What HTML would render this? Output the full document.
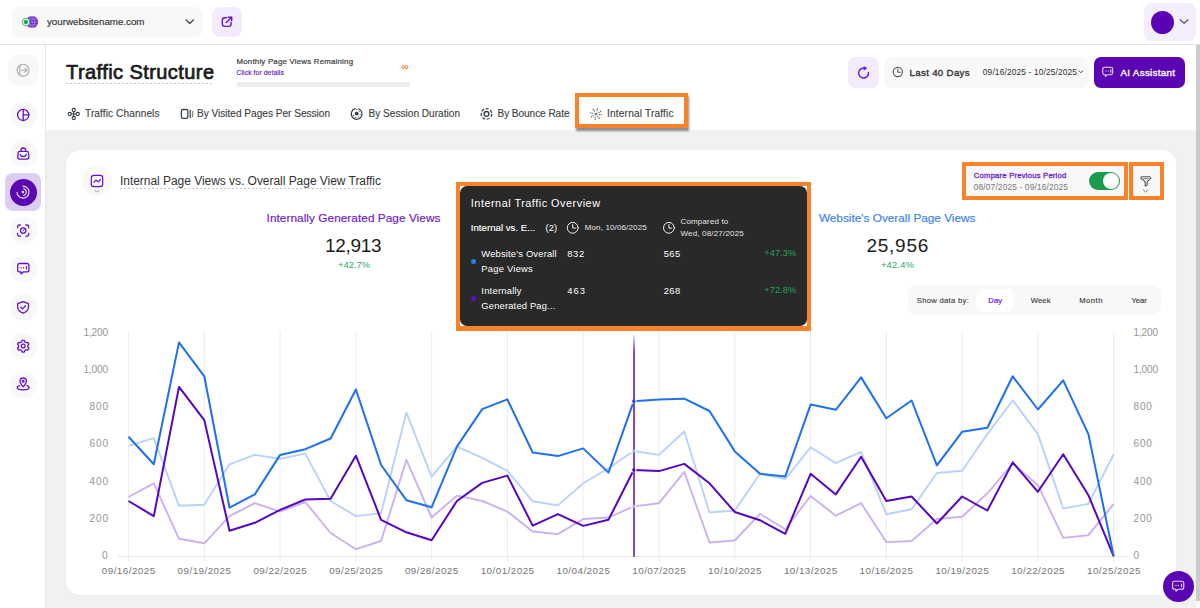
<!DOCTYPE html>
<html><head><meta charset="utf-8">
<style>
*{box-sizing:border-box;margin:0;padding:0}
html,body{width:1200px;height:608px;overflow:hidden;background:#fff;font-family:"Liberation Sans",sans-serif;color:#222}
.abs{position:absolute}
.t{position:absolute;white-space:pre;line-height:1}
.b{position:absolute}
</style></head><body>
<!-- main gray area -->
<div class="b" style="left:45px;top:45px;width:1151px;height:563px;background:#f1f1f1"></div>
<!-- page header white -->
<div class="b" style="left:45px;top:45px;width:1151px;height:84.5px;background:#fff"></div>
<!-- top bar -->
<div class="b" style="left:0;top:0;width:1200px;height:45px;background:#fff;border-bottom:1px solid #e3e3e3"></div>
<!-- sidebar -->
<div class="b" style="left:0;top:45px;width:45.5px;height:563px;background:#fff;border-right:1px solid #e6e6e6"></div>
<!-- scrollbar -->
<div class="b" style="left:1196px;top:45px;width:4px;height:563px;background:#fafafa"></div>
<div class="b" style="left:1196px;top:45px;width:4px;height:556px;background:#cbcbcb"></div>

<!-- top bar widgets -->
<div class="b" style="left:12px;top:7px;width:191px;height:30px;border-radius:8px;background:#f8f8f8"></div>
<div class="b" style="left:212px;top:7px;width:30px;height:30px;border-radius:8px;background:#f3ebfd"></div>
<div class="b" style="left:1144px;top:3px;width:52px;height:38px;border-radius:8px;background:#f3edfc"></div>
<div class="b" style="left:1151px;top:10.7px;width:23.2px;height:23.2px;border-radius:50%;background:#5a02b6"></div>

<!-- header widgets -->
<div class="b" style="left:66px;top:83px;width:148px;height:1px;background:repeating-linear-gradient(90deg,#c4c4c4 0 2.2px,transparent 2.2px 4px)"></div>
<div class="b" style="left:236.5px;top:82.2px;width:173px;height:5.2px;background:#ededed"></div>
<div class="b" style="left:848px;top:57px;width:31px;height:30.5px;border-radius:8px;background:#f3ebfd"></div>
<div class="b" style="left:884.4px;top:57px;width:204.6px;height:30.5px;border-radius:8px;background:#f8f8f8"></div>
<div class="b" style="left:1094px;top:57px;width:91px;height:30.5px;border-radius:7px;background:#5a06b3"></div>

<!-- Active tab orange box -->
<div class="b" style="left:575px;top:93px;width:113px;height:35px;border:4px solid #fa8228;background:#fff;box-shadow:1px 2.5px 2px rgba(0,0,0,.45)"></div>

<!-- sidebar buttons -->
<div class="b" style="left:8px;top:54.5px;width:30.5px;height:30.5px;border-radius:9px;background:#f8f8f8"></div>
<div class="b" style="left:10px;top:101.7px;width:26.5px;height:26.5px;border-radius:50%;background:#f8f8f8"></div>
<div class="b" style="left:10px;top:140.2px;width:26.5px;height:26.5px;border-radius:50%;background:#f8f8f8"></div>
<div class="b" style="left:4.6px;top:173.2px;width:36.8px;height:38.3px;border-radius:8px;background:#dccdf3"></div>
<div class="b" style="left:9.5px;top:178.6px;width:27px;height:27px;border-radius:50%;background:#5a06b3"></div>
<div class="b" style="left:10px;top:217.3px;width:26.5px;height:26.5px;border-radius:50%;background:#f8f8f8"></div>
<div class="b" style="left:10px;top:255.2px;width:26.5px;height:26.5px;border-radius:50%;background:#f8f8f8"></div>
<div class="b" style="left:10px;top:294px;width:26.5px;height:26.5px;border-radius:50%;background:#f8f8f8"></div>
<div class="b" style="left:10px;top:332.8px;width:26.5px;height:26.5px;border-radius:50%;background:#f8f8f8"></div>
<div class="b" style="left:10px;top:371px;width:26.5px;height:26.5px;border-radius:50%;background:#f8f8f8"></div>

<!-- card -->
<div class="b" style="left:65.8px;top:150.3px;width:1110.4px;height:444.5px;border-radius:14px;background:#fff;box-shadow:0 0 2px rgba(0,0,0,.06)"></div>
<div class="b" style="left:82px;top:166.3px;width:30px;height:30px;border-radius:50%;background:#f8f8f8"></div>
<div class="b" style="left:120px;top:188px;width:261px;height:1px;background:repeating-linear-gradient(90deg,#c4c4c4 0 2.2px,transparent 2.2px 4px)"></div>

<!-- compare box -->
<div class="b" style="left:962.1px;top:162.1px;width:165.6px;height:37.6px;border:4px solid #fa8228;background:#f8f8f8"></div>
<div class="b" style="left:1129.2px;top:162.1px;width:34.5px;height:37.6px;border:4px solid #fa8228;background:#f8f8f8"></div>
<div class="b" style="left:1089px;top:171.9px;width:31px;height:18.6px;border-radius:10px;background:#1a9c4c"></div>
<div class="b" style="left:1102.6px;top:173.2px;width:16px;height:16px;border-radius:50%;background:#fff"></div>

<!-- show data by -->
<div class="b" style="left:907.5px;top:285.1px;width:253.3px;height:30.4px;border-radius:9px;background:#f8f8f8"></div>
<div class="b" style="left:976.3px;top:288.9px;width:37.6px;height:23.1px;border-radius:8px;background:#fff"></div>

<svg class="abs" style="left:0;top:0" width="1200" height="608" viewBox="0 0 1200 608">
<line x1="128.5" y1="331" x2="128.5" y2="561" stroke="#ececec" stroke-width="1"/>
<line x1="204.3" y1="331" x2="204.3" y2="561" stroke="#ececec" stroke-width="1"/>
<line x1="280.1" y1="331" x2="280.1" y2="561" stroke="#ececec" stroke-width="1"/>
<line x1="355.9" y1="331" x2="355.9" y2="561" stroke="#ececec" stroke-width="1"/>
<line x1="431.6" y1="331" x2="431.6" y2="561" stroke="#ececec" stroke-width="1"/>
<line x1="507.4" y1="331" x2="507.4" y2="561" stroke="#ececec" stroke-width="1"/>
<line x1="583.2" y1="331" x2="583.2" y2="561" stroke="#ececec" stroke-width="1"/>
<line x1="659.0" y1="331" x2="659.0" y2="561" stroke="#ececec" stroke-width="1"/>
<line x1="734.8" y1="331" x2="734.8" y2="561" stroke="#ececec" stroke-width="1"/>
<line x1="810.6" y1="331" x2="810.6" y2="561" stroke="#ececec" stroke-width="1"/>
<line x1="886.3" y1="331" x2="886.3" y2="561" stroke="#ececec" stroke-width="1"/>
<line x1="962.1" y1="331" x2="962.1" y2="561" stroke="#ececec" stroke-width="1"/>
<line x1="1037.9" y1="331" x2="1037.9" y2="561" stroke="#ececec" stroke-width="1"/>
<line x1="1113.7" y1="331" x2="1113.7" y2="561" stroke="#ececec" stroke-width="1"/>
<line x1="118" y1="556.6" x2="1127" y2="556.6" stroke="#e6e6e6" stroke-width="1"/>
<polyline points="128.5,497.0 153.8,483.3 179.0,538.8 204.3,543.3 229.5,516.1 254.8,503.2 280.1,511.6 305.3,502.1 330.6,533.0 355.9,549.2 381.1,541.0 406.4,459.8 431.6,517.5 456.9,495.6 482.2,501.0 507.4,511.6 532.7,531.5 557.9,534.1 583.2,519.0 608.5,517.5 633.7,506.4 659.0,503.2 684.3,471.9 709.5,542.5 734.8,540.5 760.0,513.8 785.3,529.3 810.6,495.9 835.8,515.7 861.1,503.2 886.3,542.1 911.6,541.0 936.9,519.0 962.1,516.8 987.4,493.3 1012.7,463.5 1037.9,485.1 1063.2,537.9 1088.4,535.2 1113.7,503.9" fill="none" stroke="#ccb1ee" stroke-width="1.9" stroke-linejoin="round"/>
<polyline points="128.5,445.8 153.8,438.2 179.0,505.8 204.3,504.7 229.5,464.3 254.8,454.9 280.1,458.7 305.3,453.6 330.6,501.0 355.9,516.1 381.1,513.1 406.4,412.6 431.6,476.7 456.9,446.6 482.2,457.9 507.4,470.8 532.7,501.3 557.9,505.4 583.2,483.3 608.5,468.2 633.7,451.0 659.0,454.9 684.3,431.5 709.5,512.5 734.8,510.5 760.0,473.8 785.3,479.0 810.6,447.3 835.8,463.1 861.1,451.8 886.3,514.2 911.6,509.2 936.9,473.0 962.1,470.8 987.4,434.1 1012.7,400.2 1037.9,434.1 1063.2,508.4 1088.4,503.9 1113.7,454.2" fill="none" stroke="#b9d2fa" stroke-width="1.9" stroke-linejoin="round"/>
<polyline points="128.5,501.0 153.8,516.1 179.0,386.9 204.3,420.1 229.5,530.8 254.8,522.8 280.1,509.9 305.3,499.5 330.6,498.7 355.9,455.7 381.1,519.8 406.4,532.3 431.6,540.3 456.9,501.0 482.2,482.9 507.4,475.6 532.7,525.6 557.9,514.2 583.2,525.9 608.5,519.8 633.7,470.0 659.0,471.1 684.3,463.9 709.5,483.3 734.8,512.0 760.0,520.2 785.3,533.8 810.6,473.8 835.8,494.4 861.1,456.8 886.3,501.0 911.6,496.5 936.9,523.5 962.1,496.5 987.4,510.5 1012.7,462.4 1037.9,491.8 1063.2,454.2 1088.4,495.2 1113.7,556.3" fill="none" stroke="#5606c0" stroke-width="2" stroke-linejoin="round"/>
<polyline points="128.5,436.7 153.8,464.3 179.0,342.4 204.3,376.3 229.5,507.7 254.8,494.4 280.1,454.9 305.3,449.2 330.6,438.5 355.9,389.5 381.1,465.0 406.4,500.2 431.6,507.3 456.9,446.6 482.2,409.1 507.4,399.4 532.7,452.5 557.9,456.1 583.2,448.4 608.5,472.6 633.7,401.3 659.0,399.4 684.3,398.7 709.5,411.0 734.8,451.4 760.0,473.8 785.3,476.4 810.6,404.6 835.8,409.8 861.1,377.4 886.3,418.2 911.6,400.5 936.9,465.4 962.1,431.8 987.4,427.7 1012.7,376.3 1037.9,409.5 1063.2,380.4 1088.4,434.1 1113.7,556.3" fill="none" stroke="#1d70ee" stroke-width="2" stroke-linejoin="round"/>
<circle cx="633.8" cy="401.3" r="2.8" fill="#fff"/>
<circle cx="633.8" cy="470.0" r="2.8" fill="#fff"/>
<circle cx="633.8" cy="451.0" r="2.8" fill="#fff"/>
<circle cx="633.8" cy="506.4" r="2.8" fill="#fff"/>
</svg>

<!-- hover line -->
<div class="b" style="left:632.8px;top:335px;width:2px;height:221.5px;background:linear-gradient(to bottom,rgba(132,72,208,.15) 0,rgba(132,72,208,1) 16px,#8448d0 100%)"></div>

<!-- tooltip -->
<div class="b" style="left:456.2px;top:182px;width:354.6px;height:148.8px;background:#fa8228"></div>
<div class="b" style="left:460.3px;top:186.2px;width:346.4px;height:139.6px;background:#fff"></div>
<div class="b" style="left:460.3px;top:186.2px;width:346.4px;height:139.6px;border-radius:7px;background:#292929"></div>
<div class="b" style="left:470.8px;top:259px;width:5.4px;height:5.4px;border-radius:50%;background:#2b7bf0"></div>
<div class="b" style="left:470.8px;top:295.6px;width:5.4px;height:5.4px;border-radius:50%;background:#5a0fc0"></div>

<!-- FAB -->
<div class="b" style="left:1163px;top:571px;width:31px;height:31px;border-radius:50%;background:#5a06b3"></div>

<svg class="abs" style="left:0;top:0" width="1200" height="608" viewBox="0 0 1200 608" fill="none" stroke-linecap="round" stroke-linejoin="round">
<!-- site icon -->
<circle cx="32.1" cy="22" r="6" fill="#6a1fc4"/>
<g stroke="#dcc8f7" stroke-width="0.55" opacity=".85"><line x1="32.1" y1="16.2" x2="32.1" y2="27.8"/><line x1="26.4" y1="22" x2="37.9" y2="22"/><line x1="27.2" y1="19.1" x2="37" y2="19.1"/><line x1="27.2" y1="24.9" x2="37" y2="24.9"/><ellipse cx="32.1" cy="22" rx="2.7" ry="5.8"/></g>
<circle cx="25.9" cy="22.05" r="3.7" fill="#eaf8f0" stroke="#35b36b" stroke-width="0.9"/>
<circle cx="25.9" cy="22.05" r="2.1" fill="#12a150"/>
<!-- site chevron -->
<polyline points="186,19.8 189.8,23.5 193.6,19.8" stroke="#444" stroke-width="1.2"/>
<!-- link icon -->
<g stroke="#6412cc" stroke-width="1.4"><path d="M226.5 17.8h-1.6a2.6 2.6 0 0 0-2.6 2.6v3.4a2.6 2.6 0 0 0 2.6 2.6h3.6a2.6 2.6 0 0 0 2.6-2.6v-1.5"/><path d="M226.3 22.6l5.2-5.2"/><path d="M228.3 17.2h3.4v3.4" /></g>
<!-- avatar chevron -->
<polyline points="1180.3,19.7 1184.1,23.4 1187.9,19.7" stroke="#555" stroke-width="1.2"/>
<!-- refresh -->
<g stroke="#6412cc" stroke-width="1.4"><path d="M868.4 72.4a4.900 4.900 0 1 1-4.300-4.200"/></g>
<path d="M864.2 66.700l2.500 1.600-2.500 1.700z" fill="#6412cc" stroke="#6412cc" stroke-width="0.700"/>
<!-- clock header -->
<g stroke="#555" stroke-width="1.1"><circle cx="897.8" cy="72" r="4.6"/><path d="M897.8 69.2v3.1h2.6"/></g>
<!-- date chevron -->
<polyline points="1078.9,70.8 1080.9,72.7 1082.9,70.8" stroke="#444" stroke-width="0.9"/>
<!-- AI chat icon -->
<g stroke="#e6d8fb" stroke-width="1.1"><path d="M1104.6 67.3h6.2a1.9 1.9 0 0 1 1.9 1.9v3.6a1.9 1.9 0 0 1-1.9 1.9h-3.4l-2 1.7v-1.7h-.8a1.9 1.9 0 0 1-1.9-1.9v-3.6a1.9 1.9 0 0 1 1.9-1.9z"/><path d="M1110.8 69.7v2.6"/></g>
<circle cx="1106" cy="71" r="0.6" fill="#e6d8fb"/><circle cx="1108.2" cy="71" r="0.6" fill="#e6d8fb"/>
<!-- FAB chat icon -->
<g stroke="#e6d8fb" stroke-width="1.1"><path d="M1174.6 581.3h7.2a2 2 0 0 1 2 2v4a2 2 0 0 1-2 2h-3.6l-2.2 1.9v-1.9h-1.4a2 2 0 0 1-2-2v-4a2 2 0 0 1 2-2z"/><path d="M1181.6 584v2.8"/></g>
<circle cx="1176" cy="585.4" r="0.65" fill="#e6d8fb"/><circle cx="1178.5" cy="585.4" r="0.65" fill="#e6d8fb"/>

<!-- tab icons -->
<g stroke="#333b42" stroke-width="1.1"><circle cx="73.75" cy="110" r="1.6"/><circle cx="73.75" cy="118" r="1.6"/><circle cx="69.75" cy="114" r="1.6"/><circle cx="77.75" cy="114" r="1.6"/><path d="M73.75 111.6v4.8M71.35 114h4.8"/></g>
<g stroke="#3a444c" stroke-width="1.3"><rect x="181.4" y="109.5" width="6.4" height="8.9" rx="1.4"/></g>
<path d="M190.3 110.4v7.1" stroke="#5f686f" stroke-width="1.6"/><path d="M192.600 111.3v5.3" stroke="#7f878d" stroke-width="1.2"/>
<g stroke="#333b42" stroke-width="1.2"><path d="M355.2 108.7a5.4 5.4 0 1 0 3.2 0.1" /><circle cx="356.7" cy="113.6" r="1.3" fill="#333b42"/></g>
<g fill="#555"><circle cx="359.3" cy="111.3" r=".6"/><circle cx="360.1" cy="114.3" r=".6"/><circle cx="358.6" cy="116.8" r=".6"/><circle cx="355.6" cy="117.4" r=".6"/><circle cx="353.5" cy="115.4" r=".6"/><circle cx="356.6" cy="109.6" r=".7"/></g>
<g stroke="#333b42"><circle cx="486.5" cy="113.9" r="5.3" stroke-width="1.2" stroke-dasharray="3.1 1.6" stroke-linecap="butt"/><circle cx="486.5" cy="113.9" r="2.4" stroke-width="1.3"/></g>
<g stroke="#5a5a5a" stroke-width="1.1" stroke-linecap="butt"><circle cx="596" cy="114" r="1.6" fill="#8a8a8a" stroke="none"/><circle cx="596" cy="114" r="3.3" stroke-dasharray="1.1 1.5"/><circle cx="596" cy="114" r="5.2" stroke-dasharray="1.3 2.78"/></g>

<!-- card icon -->
<g stroke="#6412cc" stroke-width="1.2"><rect x="91.3" y="175.4" width="11.4" height="11.2" rx="2.6"/><polyline points="93.9,182.3 96,180.2 98.2,181.8 100.4,179.4"/></g>
<polyline points="94.9,190.3 97,192.2 99.1,190.3" stroke="#999" stroke-width="0.9"/>
<!-- filter icon -->
<g stroke="#555" stroke-width="1.1"><path d="M1141.6 176.8h8.2l1 1.5-3.6 3.3v3.4l-2 .9v-4.3l-4.4-3.3z"/><path d="M1143.6 178.6h4.6" stroke-width=".8"/></g>
<polyline points="1143.4,190 1145.6,192.1 1147.8,190" stroke="#666" stroke-width="0.9"/>

<!-- tooltip clocks -->
<g stroke="#f0f0f0" stroke-width="1"><circle cx="572.7" cy="227.8" r="5.4"/><path d="M572.7 224.6v3.5h2.8"/><circle cx="668.9" cy="227.8" r="5.4"/><path d="M668.9 224.6v3.5h2.8"/></g>
<!-- hover dots -->
<circle cx="633.8" cy="401.3" r="1.7" fill="#2a3fd8"/><circle cx="633.8" cy="470" r="1.7" fill="#5606c0"/><circle cx="633.8" cy="451" r="1.6" fill="#a9b8f0"/><circle cx="633.8" cy="506.3" r="1.6" fill="#c5a6ea"/>

<!-- sidebar icons -->
<g stroke="#a8a8a8" stroke-width="1.1"><circle cx="23.1" cy="70.2" r="5.9"/><path d="M19.9 65.4v9.6"/><path d="M21.8 70.2h5M25 68.3l1.9 1.9-1.9 1.9"/></g>
<g stroke="#6412cc" stroke-width="1.3"><circle cx="23.2" cy="114.9" r="5.6"/><path d="M23.2 109.3v11.2M23.2 114.9h5.6"/></g>
<g stroke="#6412cc" stroke-width="1.3"><path d="M19.6 151.4h7.4a1.4 1.4 0 0 1 1.4 1.4l.5 4.4a1.8 1.8 0 0 1-1.8 1.9h-7.6a1.8 1.8 0 0 1-1.8-1.9l.5-4.4a1.4 1.4 0 0 1 1.4-1.400z"/><path d="M20.900 151.200v-.8a2.400 2.400 0 0 1 4.800 0v.8"/><path d="M20.300 154.400a3.200 3.200 0 0 0 6 0"/></g>
<g stroke="#efe6fb" stroke-width="1.1"><path d="M23 186.1A6 6 0 1 1 17 192.3"/><path d="M23.6 188.7a3.500 3.500 0 0 1 0 6.800"/><circle cx="22.900" cy="192.100" r=".8" fill="#efe6fb"/></g>
<g stroke="#6412cc" stroke-width="1.3"><path d="M17.600 227.800v-1a1.800 1.800 0 0 1 1.800-1.800h1M25.900 225h1a1.800 1.800 0 0 1 1.800 1.800v1M28.700 233.400v1a1.800 1.800 0 0 1-1.800 1.800h-1M20.400 236.200h-1a1.800 1.800 0 0 1-1.800-1.800v-1"/><circle cx="23.200" cy="230.600" r="2.700"/><path d="M23.200 230.600l1.200-1.400" stroke-width="1"/></g>
<g stroke="#6412cc" stroke-width="1.3"><path d="M19.700 263.500h7.200a2 2 0 0 1 2 2v4.400a2 2 0 0 1-2 2h-3.600l-2.300 2v-2h-1.300a2 2 0 0 1-2-2v-4.400a2 2 0 0 1 2-2z"/><path d="M26.400 266.300v2.800" stroke-width="1.1"/></g>
<circle cx="21" cy="267.700" r=".7" fill="#6412cc"/><circle cx="23.500" cy="267.700" r=".7" fill="#6412cc"/>
<g stroke="#6412cc" stroke-width="1.3"><path d="M23.100 301.600l5.400 2.100v3.300c0 3-2.300 5-5.400 6.100c-3.100-1.100-5.400-3.100-5.400-6.100v-3.300z"/><path d="M20.800 307.200l1.700 1.700 3.100-3.200"/></g>
<g stroke="#6412cc" stroke-width="1.3"><circle cx="23.200" cy="346" r="1.900"/><path d="M22.100 340.300h2.200l.5 1.600 1.400.800 1.600-.4 1.100 1.900-1.100 1.200v1.600l1.100 1.200-1.100 1.900-1.600-.4-1.400.8-.5 1.600h-2.200l-.5-1.600-1.400-.8-1.600.4-1.100-1.900 1.100-1.200v-1.600l-1.100-1.200 1.100-1.900 1.600.4 1.400-.8z"/></g>
<g stroke="#6412cc" stroke-width="1.3"><path d="M23.200 386.800c-1.900-2.200-3.200-3.900-3.200-5.600a3.200 3.200 0 0 1 6.400 0c0 1.700-1.300 3.400-3.200 5.600z"/><circle cx="23.200" cy="381.200" r=".9"/><path d="M19.500 385.600c-1.500.5-2.300 1.200-2.300 2 0 1.400 2.700 2.300 6 2.300s6-.9 6-2.300c0-.8-.8-1.500-2.300-2"/></g>
</svg>
<!-- infinity -->
<div class="t" style="left:401.6px;top:61.6px;font-size:10px;font-weight:700;color:#fa8228">∞</div>

<div class="t" style="left:47.0px;top:17.2px;font-size:9.8px;font-weight:400;color:#2f2f2f;letter-spacing:-0.029px;-webkit-text-stroke:0.14px #2f2f2f">yourwebsitename.com</div>
<div class="t" style="left:66.0px;top:62.4px;font-size:20px;font-weight:400;color:#1c1c1c;letter-spacing:0.428px;-webkit-text-stroke:0.72px #1c1c1c">Traffic Structure</div>
<div class="t" style="left:236.5px;top:58.2px;font-size:7.8px;font-weight:400;color:#3a3a3a;letter-spacing:0.243px;-webkit-text-stroke:0.20px #3a3a3a">Monthly Page Views Remaining</div>
<div class="t" style="left:236.5px;top:69.7px;font-size:6.7px;font-weight:400;color:#6b21c8;letter-spacing:0.122px;-webkit-text-stroke:0.17px #6b21c8">Click for details</div>
<div class="t" style="left:909.6px;top:67.8px;font-size:9.7px;font-weight:400;color:#333;letter-spacing:0.314px;-webkit-text-stroke:0.35px #333">Last 40 Days</div>
<div class="t" style="left:982.8px;top:68.2px;font-size:8.4px;font-weight:400;color:#333;letter-spacing:0.133px">09/16/2025 - 10/25/2025</div>
<div class="t" style="left:1120.5px;top:67.8px;font-size:9.8px;font-weight:400;color:#fff;letter-spacing:0.301px;-webkit-text-stroke:0.35px #fff">AI Assistant</div>
<div class="t" style="left:85.0px;top:108.8px;font-size:10.1px;font-weight:400;color:#3f3f3f;letter-spacing:0.104px;-webkit-text-stroke:0.14px #3f3f3f">Traffic Channels</div>
<div class="t" style="left:197.0px;top:108.8px;font-size:10.1px;font-weight:400;color:#3f3f3f;letter-spacing:-0.013px;-webkit-text-stroke:0.14px #3f3f3f">By Visited Pages Per Session</div>
<div class="t" style="left:368.5px;top:108.8px;font-size:10.1px;font-weight:400;color:#3f3f3f;letter-spacing:0.003px;-webkit-text-stroke:0.14px #3f3f3f">By Session Duration</div>
<div class="t" style="left:497.5px;top:108.8px;font-size:10.1px;font-weight:400;color:#3f3f3f;letter-spacing:-0.073px;-webkit-text-stroke:0.14px #3f3f3f">By Bounce Rate</div>
<div class="t" style="left:607.0px;top:108.8px;font-size:10.1px;font-weight:400;color:#3f3f3f;letter-spacing:0.188px;-webkit-text-stroke:0.14px #3f3f3f">Internal Traffic</div>
<div class="t" style="left:120.0px;top:174.7px;font-size:12px;font-weight:400;color:#333;letter-spacing:-0.038px">Internal Page Views vs. Overall Page View Traffic</div>
<div class="t" style="left:266.6px;top:212.6px;font-size:11.8px;font-weight:400;color:#6b21c8;letter-spacing:0.051px;-webkit-text-stroke:0.17px #6b21c8">Internally Generated Page Views</div>
<div class="t" style="left:324.9px;top:236.4px;font-size:19px;font-weight:400;color:#1c1c1c;letter-spacing:-0.285px">12,913</div>
<div class="t" style="left:338.0px;top:260.3px;font-size:9.4px;font-weight:400;color:#2aa86a;letter-spacing:0.027px">+42.7%</div>
<div class="t" style="left:818.9px;top:212.6px;font-size:11.8px;font-weight:400;color:#3b82f6;letter-spacing:0.001px;-webkit-text-stroke:0.17px #3b82f6">Website's Overall Page Views</div>
<div class="t" style="left:866.5px;top:236.4px;font-size:19px;font-weight:400;color:#1c1c1c;letter-spacing:0.735px">25,956</div>
<div class="t" style="left:880.9px;top:260.3px;font-size:9.4px;font-weight:400;color:#2aa86a;letter-spacing:0.228px">+42.4%</div>
<div class="t" style="left:973.8px;top:171.7px;font-size:7.7px;font-weight:400;color:#6b21c8;letter-spacing:0.203px;-webkit-text-stroke:0.28px #6b21c8">Compare Previous Period</div>
<div class="t" style="left:973.8px;top:182.9px;font-size:8.3px;font-weight:400;color:#777;letter-spacing:0.166px">08/07/2025 - 09/16/2025</div>
<div class="t" style="left:916.8px;top:296.9px;font-size:7.7px;font-weight:400;color:#3a3a3a;letter-spacing:0.272px;-webkit-text-stroke:0.11px #3a3a3a">Show data by:</div>
<div class="t" style="left:988.2px;top:296.9px;font-size:7.7px;font-weight:400;color:#6b21c8;letter-spacing:0.164px;-webkit-text-stroke:0.20px #6b21c8">Day</div>
<div class="t" style="left:1030.7px;top:296.9px;font-size:7.7px;font-weight:400;color:#333;letter-spacing:0.095px;-webkit-text-stroke:0.11px #333">Week</div>
<div class="t" style="left:1079.2px;top:296.9px;font-size:7.7px;font-weight:400;color:#333;letter-spacing:0.481px;-webkit-text-stroke:0.11px #333">Month</div>
<div class="t" style="left:1131.5px;top:296.9px;font-size:7.7px;font-weight:400;color:#333;letter-spacing:-0.049px;-webkit-text-stroke:0.11px #333">Year</div>
<div class="t" style="left:470.8px;top:197.7px;font-size:10.9px;font-weight:400;color:#fff;letter-spacing:0.499px">Internal Traffic Overview</div>
<div class="t" style="left:470.8px;top:223.1px;font-size:9.6px;font-weight:400;color:#fff;letter-spacing:0.031px;-webkit-text-stroke:0.13px #fff">Internal vs. E...</div>
<div class="t" style="left:545.5px;top:223.2px;font-size:9.4px;font-weight:400;color:#fff;letter-spacing:0.116px">(2)</div>
<div class="t" style="left:584.7px;top:223.9px;font-size:8px;font-weight:400;color:#e6e6e6;letter-spacing:0.140px">Mon, 10/06/2025</div>
<div class="t" style="left:680.5px;top:218.3px;font-size:8px;font-weight:400;color:#e6e6e6;letter-spacing:0.155px">Compared to</div>
<div class="t" style="left:680.5px;top:229.5px;font-size:8px;font-weight:400;color:#e6e6e6;letter-spacing:0.172px">Wed, 08/27/2025</div>
<div class="t" style="left:481.3px;top:249.1px;font-size:9.4px;font-weight:400;color:#fff;letter-spacing:0.182px">Website's Overall</div>
<div class="t" style="left:481.3px;top:263.7px;font-size:9.4px;font-weight:400;color:#fff;letter-spacing:0.240px">Page Views</div>
<div class="t" style="left:567.2px;top:249.1px;font-size:9.4px;font-weight:400;color:#fff;letter-spacing:0.672px">832</div>
<div class="t" style="left:663.7px;top:249.1px;font-size:9.4px;font-weight:400;color:#fff;letter-spacing:0.472px">565</div>
<div class="t" style="left:764.2px;top:249.2px;font-size:9.2px;font-weight:400;color:#1fa85a;letter-spacing:0.116px">+47.3%</div>
<div class="t" style="left:481.3px;top:285.9px;font-size:9.4px;font-weight:400;color:#fff;letter-spacing:0.239px">Internally</div>
<div class="t" style="left:481.3px;top:300.7px;font-size:9.4px;font-weight:400;color:#fff;letter-spacing:0.173px">Generated Pag...</div>
<div class="t" style="left:567.2px;top:285.9px;font-size:9.4px;font-weight:400;color:#fff;letter-spacing:1.072px">463</div>
<div class="t" style="left:663.7px;top:285.9px;font-size:9.4px;font-weight:400;color:#fff;letter-spacing:0.472px">268</div>
<div class="t" style="left:764.2px;top:286.0px;font-size:9.2px;font-weight:400;color:#1fa85a;letter-spacing:0.116px">+72.8%</div>
<div class="t" style="left:83.5px;top:327.6px;font-size:10.1px;font-weight:400;color:#969696;letter-spacing:-0.191px">1,200</div>
<div class="t" style="left:1133.5px;top:327.6px;font-size:10.1px;font-weight:400;color:#969696;letter-spacing:-0.191px">1,200</div>
<div class="t" style="left:83.5px;top:364.8px;font-size:10.1px;font-weight:400;color:#969696;letter-spacing:-0.191px">1,000</div>
<div class="t" style="left:1133.5px;top:364.8px;font-size:10.1px;font-weight:400;color:#969696;letter-spacing:-0.191px">1,000</div>
<div class="t" style="left:89.6px;top:402.1px;font-size:10.1px;font-weight:400;color:#969696;letter-spacing:0.778px">800</div>
<div class="t" style="left:1133.5px;top:402.1px;font-size:10.1px;font-weight:400;color:#969696;letter-spacing:0.778px">800</div>
<div class="t" style="left:89.6px;top:439.4px;font-size:10.1px;font-weight:400;color:#969696;letter-spacing:0.778px">600</div>
<div class="t" style="left:1133.5px;top:439.4px;font-size:10.1px;font-weight:400;color:#969696;letter-spacing:0.778px">600</div>
<div class="t" style="left:89.6px;top:476.6px;font-size:10.1px;font-weight:400;color:#969696;letter-spacing:0.778px">400</div>
<div class="t" style="left:1133.5px;top:476.6px;font-size:10.1px;font-weight:400;color:#969696;letter-spacing:0.778px">400</div>
<div class="t" style="left:89.6px;top:513.9px;font-size:10.1px;font-weight:400;color:#969696;letter-spacing:0.778px">200</div>
<div class="t" style="left:1133.5px;top:513.9px;font-size:10.1px;font-weight:400;color:#969696;letter-spacing:0.778px">200</div>
<div class="t" style="left:101.9px;top:551.2px;font-size:10.1px;font-weight:400;color:#969696;letter-spacing:0.000px">0</div>
<div class="t" style="left:1133.5px;top:551.2px;font-size:10.1px;font-weight:400;color:#969696;letter-spacing:0.000px">0</div>
<div class="t" style="left:101.8px;top:565.6px;font-size:9.9px;font-weight:400;color:#757575;letter-spacing:0.440px">09/16/2025</div>
<div class="t" style="left:177.6px;top:565.6px;font-size:9.9px;font-weight:400;color:#757575;letter-spacing:0.440px">09/19/2025</div>
<div class="t" style="left:253.4px;top:565.6px;font-size:9.9px;font-weight:400;color:#757575;letter-spacing:0.440px">09/22/2025</div>
<div class="t" style="left:329.2px;top:565.6px;font-size:9.9px;font-weight:400;color:#757575;letter-spacing:0.440px">09/25/2025</div>
<div class="t" style="left:404.9px;top:565.6px;font-size:9.9px;font-weight:400;color:#757575;letter-spacing:0.440px">09/28/2025</div>
<div class="t" style="left:480.7px;top:565.6px;font-size:9.9px;font-weight:400;color:#757575;letter-spacing:0.440px">10/01/2025</div>
<div class="t" style="left:556.5px;top:565.6px;font-size:9.9px;font-weight:400;color:#757575;letter-spacing:0.440px">10/04/2025</div>
<div class="t" style="left:632.3px;top:565.6px;font-size:9.9px;font-weight:400;color:#757575;letter-spacing:0.440px">10/07/2025</div>
<div class="t" style="left:708.1px;top:565.6px;font-size:9.9px;font-weight:400;color:#757575;letter-spacing:0.440px">10/10/2025</div>
<div class="t" style="left:783.9px;top:565.6px;font-size:9.9px;font-weight:400;color:#757575;letter-spacing:0.440px">10/13/2025</div>
<div class="t" style="left:859.6px;top:565.6px;font-size:9.9px;font-weight:400;color:#757575;letter-spacing:0.440px">10/16/2025</div>
<div class="t" style="left:935.4px;top:565.6px;font-size:9.9px;font-weight:400;color:#757575;letter-spacing:0.440px">10/19/2025</div>
<div class="t" style="left:1011.2px;top:565.6px;font-size:9.9px;font-weight:400;color:#757575;letter-spacing:0.440px">10/22/2025</div>
<div class="t" style="left:1087.0px;top:565.6px;font-size:9.9px;font-weight:400;color:#757575;letter-spacing:0.440px">10/25/2025</div>
</body></html>
